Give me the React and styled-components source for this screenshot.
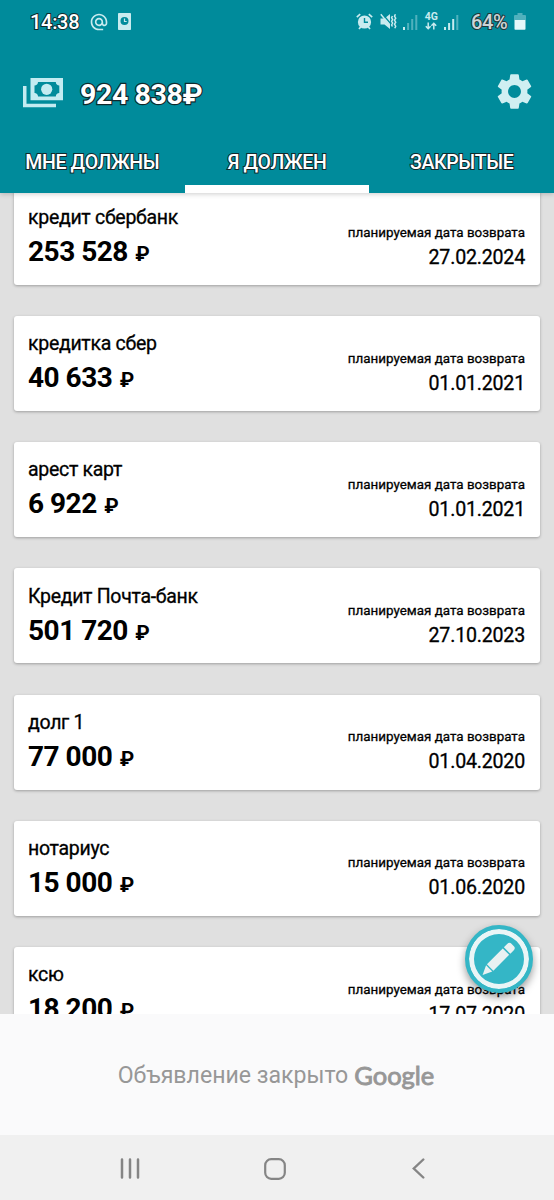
import React, { useState } from "react";
import styled, { createGlobalStyle } from "styled-components";
import { MdAlternateEmail, MdSettings } from "react-icons/md";

const tabs = ["МНЕ ДОЛЖНЫ", "Я ДОЛЖЕН", "ЗАКРЫТЫЕ"];

const debts = [
  { name: "кредит сбербанк", amount: "253 528", date: "27.02.2024" },
  { name: "кредитка сбер", amount: "40 633", date: "01.01.2021" },
  { name: "арест карт", amount: "6 922", date: "01.01.2021" },
  { name: "Кредит Почта-банк", amount: "501 720", date: "27.10.2023" },
  { name: "долг 1", amount: "77 000", date: "01.04.2020" },
  { name: "нотариус", amount: "15 000", date: "01.06.2020" },
  { name: "ксю", amount: "18 200", date: "17.07.2020" },
];

const AlarmIcon = () => (
  <svg width="17" height="17" viewBox="0 0 17 17" fill="none">
    <path d="M0.8 4.2L4.2 1.2M16.2 4.2L12.8 1.2M3 16l2-2.5M14 16l-2-2.5" stroke="#c9ebef" strokeWidth="1.7" />
    <circle cx="8.5" cy="9" r="6.6" fill="#c9ebef" />
    <path d="M8.5 5v4.3H12" stroke="#008b9b" strokeWidth="1.4" />
  </svg>
);

const MuteIcon = () => (
  <svg width="17" height="17" viewBox="0 0 17 17" fill="none">
    <path d="M0.5 5.5h4L10 1v15l-5.500-4.500h-4z" fill="#c9ebef" />
    <path d="M2 0.5L11 11" stroke="#008b9b" strokeWidth="1.2" />
    <path d="M0.8 1.3L9.500 12" stroke="#c9ebef" strokeWidth="1.4" />
    <path
      d="M12.4 3l-.8 1.7 1 1.8-1 1.8 1 1.8-1 1.800.8 1.600M15.4 1.2l-.9 2 1.2 2-1.2 2 1.2 2-1.2 2 1.2 2-.9 2"
      stroke="#c9ebef"
      strokeWidth="1.5"
    />
  </svg>
);

// level - сколько полосок закрашено полностью
const SignalIcon = ({ level }) => (
  <svg width="15" height="16" viewBox="0 0 15 16" fill="#c9ebef">
    {[3, 7, 11, 15].map((h, i) => (
      <rect
        key={h}
        x={i * 4.1}
        y={16 - h}
        width="2"
        height={h}
        opacity={i < level ? 1 : 0.4}
      />
    ))}
  </svg>
);

const ArrowsIcon = () => (
  <svg width="12" height="8" viewBox="0 0 12 8" fill="none" stroke="#c9ebef" strokeWidth="1.5">
    <path d="M3.2 0.5v6M0.8 4.2l2.4 2.5 2.4-2.5M8.8 7.5v-6M6.4 3.8l2.4-2.5 2.4 2.5" />
  </svg>
);

const BatteryIcon = () => (
  <svg width="12" height="17" viewBox="0 0 12 17" fill="#c9ebef">
    <path d="M3.5 0h5v2H11a1 1 0 011 1v4H0V3a1 1 0 011-1h2.5z" opacity="0.4" />
    <path d="M0.5 7h11v9a0.8 0.8 0 01-.8.8H1.3a0.8 0.8 0 01-.8-.8z" fill="#e6f8fa" />
  </svg>
);

const PhoneClockIcon = () => (
  <svg width="13" height="17" viewBox="0 0 13 17" fill="none">
    <rect width="13" height="17" rx="0.8" fill="#c9ebef" />
    <circle cx="6.5" cy="8" r="4" fill="#008b9b" />
    <path d="M6.5 5.5v3h2.2" stroke="#c9ebef" strokeWidth="1.2" />
  </svg>
);

const MoneyIcon = () => (
  <svg width="40" height="30" viewBox="0 0 40 30" fill="#c3ebf1">
    <path d="M0 8h3.5v17.8H33V29.3H0z" />
    <path
      fillRule="evenodd"
      d="M7.5 0H40v22.3H7.5zM15 4c0 2-1.5 3.5-3.5 3.5v7.5c2 0 3.5 1.5 3.5 3.5h17.8c0-2 1.5-3.5 3.5-3.5V7.5c-2 0-3.5-1.5-3.5-3.5z"
    />
    <circle cx="23.7" cy="11.3" r="5.6" />
  </svg>
);

const PencilIcon = () => (
  <svg width="50" height="50" viewBox="0 0 50 50" fill="#e9f1f2">
    <g transform="translate(8.6 41) rotate(-45) scale(1.09 0.95)">
      <path d="M0 0L8.5-4.6V4.6z" />
      <rect x="9.8" y="-4.8" width="20.5" height="9.6" />
      <path d="M31.8-4.800h4.2a3 3 0 013 3v3.600a3 3 0 01-3 3h-4.2z" />
    </g>
  </svg>
);

const RecentsIcon = () => (
  <svg width="20" height="21" viewBox="0 0 20 21" stroke="#858585" strokeWidth="2.5" strokeLinecap="round">
    <path d="M2 1.5v18M10 1.5v18M18 1.5v18" />
  </svg>
);

const HomeIcon = () => (
  <svg width="22" height="22" viewBox="0 0 22 22" fill="none" stroke="#858585" strokeWidth="2.2">
    <rect x="1.2" y="1.2" width="19.6" height="19.6" rx="6" />
  </svg>
);

const BackIcon = () => (
  <svg width="13" height="21" viewBox="0 0 13 21" fill="none" stroke="#858585" strokeWidth="2.4" strokeLinecap="round">
    <path d="M11.3 1.5L1.8 10.5l9.5 9" />
  </svg>
);

const App = () => {
  const [activeTab, setActiveTab] = useState(1);

  return (
    <Screen>
      <GlobalStyle />
      <Header>
        <StatusBar>
          <Clock>14:38</Clock>
          <MdAlternateEmail size={20} />
          <PhoneClockIcon />
          <StatusRight>
            <AlarmIcon />
            <MuteIcon />
            <SignalIcon level={1} />
            <Network>
              4G
              <ArrowsIcon />
            </Network>
            <SignalIcon level={3} />
            <Percent>64%</Percent>
            <BatteryIcon />
          </StatusRight>
        </StatusBar>
        <Toolbar>
          <MoneyIcon />
          <Total>924 838₽</Total>
          <SettingsButton>
            <MdSettings size={43} />
          </SettingsButton>
        </Toolbar>
        <TabRow>
          {tabs.map((tab, i) => (
            <Tab key={tab} $active={i === activeTab} onClick={() => setActiveTab(i)}>
              {tab}
            </Tab>
          ))}
        </TabRow>
      </Header>

      <DebtList>
        {debts.map((debt) => (
          <Card key={debt.name}>
            <div>
              <DebtName>{debt.name}</DebtName>
              <Amount>
                {debt.amount} <Ruble>₽</Ruble>
              </Amount>
            </div>
            <ReturnInfo>
              <ReturnLabel>планируемая дата возврата</ReturnLabel>
              <ReturnDate>{debt.date}</ReturnDate>
            </ReturnInfo>
          </Card>
        ))}
        <AddButton>
          <PencilIcon />
        </AddButton>
      </DebtList>

      <AdBanner>
        Объявление закрыто <Brand>Google</Brand>
      </AdBanner>
      <NavBar>
        <RecentsIcon />
        <HomeIcon />
        <BackIcon />
      </NavBar>
    </Screen>
  );
};

export default App;

// Styled Components
const GlobalStyle = createGlobalStyle`
  * {
    box-sizing: border-box;
  }

  body {
    margin: 0;
    font-family: Roboto, sans-serif;
  }

  svg {
    display: block;
    flex-shrink: 0;
  }
`;

const Screen = styled.div`
  display: flex;
  flex-direction: column;
  width: 554px;
  height: 1200px;
  overflow: hidden;
  background: #e0e0e0;
`;

const Header = styled.header`
  position: relative;
  z-index: 1;
  flex: 0 0 193px;
  display: flex;
  flex-direction: column;
  background: #008b9b;
  color: #fff;
  box-shadow: 0 1px 5px rgba(0, 0, 0, 0.2);
`;

const StatusBar = styled.div`
  display: flex;
  align-items: center;
  height: 43px;
  padding: 0 28px 0 30px;
  color: #c9ebef;

  > svg {
    margin-right: 9px;
  }
`;

const Clock = styled.span`
  width: 59px;
  color: #fff;
  font-size: 20px;
  font-weight: 500;
  letter-spacing: -0.3px;
  -webkit-text-stroke: 2px #10292c;
  paint-order: stroke fill;
`;

const StatusRight = styled.div`
  display: flex;
  align-items: center;
  gap: 6.5px;
  margin-left: auto;
`;

const Network = styled.div`
  display: flex;
  flex-direction: column;
  align-items: center;
  gap: 1px;
  width: 13px;
  font-size: 10.5px;
  line-height: 8px;
  font-weight: 700;
`;

const Percent = styled.span`
  margin: 0 0 0 5px;
  color: #ccd5d7;
  font-size: 20px;
  font-weight: 500;
  letter-spacing: -0.3px;
  -webkit-text-stroke: 2px #22373a;
  paint-order: stroke fill;
`;

const Toolbar = styled.div`
  display: flex;
  align-items: center;
  height: 99px;
  padding: 0 18px 0 23px;
`;

const Total = styled.div`
  margin: 4px 0 0 17px;
  font-size: 28.5px;
  font-weight: 700;
  letter-spacing: -0.4px;
  -webkit-text-stroke: 2.4px #10292c;
  paint-order: stroke fill;
`;

const SettingsButton = styled.button`
  margin: -3px 0 0 auto;
  padding: 0;
  border: none;
  background: none;
  color: #cfeff2;
  cursor: pointer;
`;

const TabRow = styled.nav`
  display: flex;
  flex: 1;
`;

const Tab = styled.button`
  flex: 1 1 0;
  padding: 0 0 2px;
  border: none;
  border-bottom: 8px solid ${(props) => (props.$active ? "#fff" : "transparent")};
  background: none;
  color: #fff;
  font-family: inherit;
  font-size: 19.5px;
  font-weight: 500;
  letter-spacing: -0.35px;
  white-space: nowrap;
  -webkit-text-stroke: 2px #10292c;
  paint-order: stroke fill;
  cursor: pointer;
`;

const DebtList = styled.main`
  position: relative;
  flex: 0 0 824.2px;
  display: flex;
  flex-direction: column;
  gap: 31.2px;
  margin-top: -3.2px;
  padding: 0 14px;
  overflow: hidden;
`;

const Card = styled.article`
  flex: 0 0 95px;
  display: flex;
  justify-content: space-between;
  padding: 15.3px 15px 0 14px;
  border-radius: 3px;
  background: #fff;
  box-shadow: 0 1px 3px rgba(0, 0, 0, 0.3);
  color: #000;
`;

const DebtName = styled.div`
  font-size: 19.5px;
  line-height: 26px;
  letter-spacing: -0.3px;
  -webkit-text-stroke: 0.3px #000;
`;

const Amount = styled.div`
  font-size: 28px;
  line-height: 42px;
  font-weight: 700;
  letter-spacing: -0.5px;
`;

const Ruble = styled.span`
  margin-left: 1px;
  font-size: 20.5px;
`;

const ReturnInfo = styled.div`
  padding-top: 16.4px;
  text-align: right;
`;

const ReturnLabel = styled.div`
  font-size: 13.4px;
  line-height: 22px;
  -webkit-text-stroke: 0.3px #000;
`;

const ReturnDate = styled.div`
  font-size: 19.6px;
  line-height: 28px;
  letter-spacing: -0.2px;
  -webkit-text-stroke: 0.3px #000;
`;

const AddButton = styled.button`
  position: absolute;
  right: 21px;
  bottom: 21px;
  display: flex;
  align-items: center;
  justify-content: center;
  width: 68px;
  height: 68px;
  padding: 0;
  border: 4px solid #34b6c6;
  border-radius: 50%;
  background: #34b6c6;
  box-shadow: inset 0 0 0 5px #eaf5f6, 0 4px 8px rgba(0, 0, 0, 0.4);
  cursor: pointer;
`;

const AdBanner = styled.div`
  flex: 0 0 121px;
  display: flex;
  align-items: center;
  justify-content: center;
  gap: 6px;
  padding: 1px 2px 0 0;
  background: #fafafb;
  color: #979797;
  font-size: 23.1px;
`;

const Brand = styled.span`
  font-family: Lato, sans-serif;
  font-size: 25.5px;
  -webkit-text-stroke: 0.9px #979797;
`;

const NavBar = styled.footer`
  flex: 1;
  display: flex;
  align-items: center;
  justify-content: space-between;
  padding: 2px 129px 0 120px;
  background: #f0f0f0;

  svg:nth-child(2) {
    margin-right: 3px;
  }
`;
